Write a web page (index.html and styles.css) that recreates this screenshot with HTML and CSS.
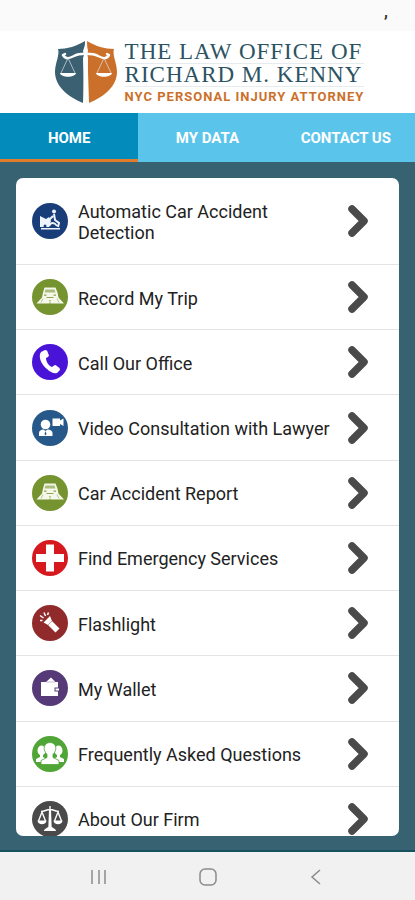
FILE: index.html
```html
<!DOCTYPE html>
<html lang="en">
<head>
<meta charset="utf-8">
<meta name="viewport" content="width=device-width, initial-scale=1">
<title>The Law Office of Richard M. Kenny</title>
<link rel="stylesheet" href="styles.css">
</head>
<body>
<svg class="defs" aria-hidden="true">
  <symbol id="chevron" viewBox="0 0 20 32"><path d="M4 4l12 12L4 28" fill="none" stroke="#4a4a4b" stroke-width="7.500" stroke-linecap="round" stroke-linejoin="round"/></symbol>
  <symbol id="road" viewBox="0 0 36 36">
    <circle cx="18" cy="18" r="18" fill="#75932f"/>
    <path d="M12.500 8.500h11l2 5 1 5 5.500 6H4.500l5.500-6 1-5z" fill="#f4f7e9"/>
    <path d="M13.500 10.500h9l1 3h-11z" fill="#a9bd7c"/>
    <path d="M12 16.200h2.500M21.500 16.200H24M14.500 18.500h7M18 21v1.500M18 23.500V25" stroke="#8ba550" stroke-width="1.200"/>
    <path d="M11 19.500L9 23.500M25 19.500l2 4" stroke="#b9c995" stroke-width="1"/>
  </symbol>
</svg>
<div class="status"><span>,</span></div>
<header class="brand">
  <svg class="shield" viewBox="0 0 62 62" aria-hidden="true">
    <path d="M30 0C22 5 12 8 3 8c2 6-3 14-3 23 0 14 13 25 28 31z" fill="#3b6072"/>
    <path d="M32 0c8 5 18 8 27 8-2 6 3 14 3 23 0 14-13 25-28 31z" fill="#cb702b"/>
    <path d="M31 1l2 9-1 4 1 3-1 45h-3l-1-45 1-3-1-4z" fill="#fff"/>
    <path d="M8 14c3 5 7 3 11 1 5-3 19-3 24 0 4 2 8 4 11-1M8 14l2-1M54 14l-2-1" fill="none" stroke="#fff" stroke-width="2.500" stroke-linecap="round"/>
    <path d="M13 17L6 32M13 17l7 15M49 17l-7 15M49 17l7 15" stroke="#dce2e2" stroke-width=".7"/>
    <path d="M5 32h16c-1 5-15 5-16 0zM41 32h16c-1 5-15 5-16 0z" fill="#fff"/>
  </svg>
  <div class="brand-text">
    <p class="name">THE LAW OFFICE OF</p>
    <p class="name">RICHARD M. KENNY</p>
    <p class="tagline">NYC PERSONAL INJURY ATTORNEY</p>
  </div>
</header>
<nav class="tabs">
  <a class="active" href="#home" aria-current="page">HOME</a>
  <a href="#data">MY DATA</a>
  <a href="#contact">CONTACT US</a>
</nav>
<main>
  <div class="card">
    <ul class="menu">
      <li><a href="#detection">
        <svg class="icon" viewBox="0 0 36 36"><circle cx="18" cy="18" r="18" fill="#183d78"/><path d="M8 13l6 3 3-2 2 4-2 6H8zM9 25h19v1.500H9z" fill="#eef3fa"/><circle cx="22" cy="8.500" r="2" fill="#eef3fa"/><path d="M22 11l1 6 4 3-1 4M21 13l-4 4M17 23c2-4 5-4 8 0" fill="none" stroke="#eef3fa" stroke-width="2"/><circle cx="13" cy="23" r="1.500" fill="#183d78"/><circle cx="22" cy="23" r="1.500" fill="#183d78"/></svg>
        <span>Automatic Car Accident Detection</span><svg class="chevron"><use href="#chevron"/></svg></a></li>
      <li><a href="#trip"><svg class="icon"><use href="#road"/></svg><span>Record My Trip</span><svg class="chevron"><use href="#chevron"/></svg></a></li>
      <li><a href="#call">
        <svg class="icon" viewBox="0 0 36 36"><circle cx="18" cy="18" r="18" fill="#4a14d8"/><path d="M9 8l4-2 2 .5 2 5-1 1.500-2 1c0 4 3 8 6 9l2-1.500 1.500-.5 4 3 .5 2-3 3c-3 1-7-1-10-4-5-4-8-10-7-15z" fill="#fff"/></svg>
        <span>Call Our Office</span><svg class="chevron"><use href="#chevron"/></svg></a></li>
      <li><a href="#video">
        <svg class="icon" viewBox="0 0 36 36"><circle cx="18" cy="18" r="18" fill="#265889"/><circle cx="13.500" cy="14.500" r="4.800" fill="#fff"/><path d="M7 26v-3c0-2 2-3.500 4.500-3.500l2 1.500 2-1.500c2.500 0 5 1.500 5 3.500v3zM20.500 8.500H28v2l3.500-2v7.500l-3.500-2v2h-7.500z" fill="#fff"/><path d="M13.500 21l-1 3 1 1.500 1-1.500z" fill="#265889"/></svg>
        <span>Video Consultation with Lawyer</span><svg class="chevron"><use href="#chevron"/></svg></a></li>
      <li><a href="#report"><svg class="icon"><use href="#road"/></svg><span>Car Accident Report</span><svg class="chevron"><use href="#chevron"/></svg></a></li>
      <li><a href="#emergency">
        <svg class="icon" viewBox="0 0 36 36"><circle cx="18" cy="18" r="18" fill="#d5191e"/><path d="M14 4.500h8V14h10v8H22v9.500h-8V22H4v-8h10z" fill="#fff"/></svg>
        <span>Find Emergency Services</span><svg class="chevron"><use href="#chevron"/></svg></a></li>
      <li><a href="#flashlight">
        <svg class="icon" viewBox="0 0 36 36"><circle cx="18" cy="18" r="18" fill="#912a2a"/><path d="M11.500 17.500l6.500-6.500 2 5 7.500 7.500-4 4-7.500-7.500z" fill="#fff"/><path d="M8 15.500l2.500 0M8 10.500l3.500 2.500M12 7.500l1.500 3.500M16.500 7.500l-1 2.500" stroke="#fff" stroke-width="1.500"/><path d="M16 20l4-4" stroke="#c98583" stroke-width=".8"/></svg>
        <span>Flashlight</span><svg class="chevron"><use href="#chevron"/></svg></a></li>
      <li><a href="#wallet">
        <svg class="icon" viewBox="0 0 36 36"><circle cx="18" cy="18" r="18" fill="#563a78"/><path d="M9 12h5l5-4.500 4.500 4.500H26v5.500h-3.500v4H26V26H9zM23.500 18.500H27v2h-3.500z" fill="#fff"/><path d="M14 12h9" stroke="#b8a9cb" stroke-width=".8"/></svg>
        <span>My Wallet</span><svg class="chevron"><use href="#chevron"/></svg></a></li>
      <li><a href="#faq">
        <svg class="icon" viewBox="0 0 36 36"><circle cx="18" cy="18" r="18" fill="#4fa535"/><g fill="#fff"><ellipse cx="9.500" cy="14.500" rx="4" ry="5"/><ellipse cx="26.500" cy="14.500" rx="4" ry="5"/><path d="M4 26v-3l4-2v-3h3v3l4 2v3zM21 26v-3l4-2v-3h3v3l4 2v3z"/></g><path d="M9 28.500V24.500l6-3v-3c-5-5-3-12 3-12s8 7 3 12v3l6 3v4z" fill="#fff" stroke="#4fa535" stroke-width=".8"/></svg>
        <span>Frequently Asked Questions</span><svg class="chevron"><use href="#chevron"/></svg></a></li>
      <li><a href="#about">
        <svg class="icon" viewBox="0 0 36 36"><circle cx="18" cy="18" r="18" fill="#4a4a4b"/><path d="M18 5v22M9 10.500c4 0 5-2 9-2s5 2 9 2M10 11L6.500 20M10 11l3.500 9M26 11l-3.500 9M26 11l3.500 9" fill="none" stroke="#fff" stroke-width="1.400"/><path d="M17 8h2l.7 19h-3.400zM5.500 19.500h9c0 5-9 5-9 0zM21.500 19.500h9c0 5-9 5-9 0zM12 30c0-2 3-3 4-4h4c1 1 4 2 4 4z" fill="#fff"/></svg>
        <span>About Our Firm</span><svg class="chevron"><use href="#chevron"/></svg></a></li>
    </ul>
  </div>
</main>
<footer class="system">
  <button aria-label="Recent apps"><svg viewBox="0 0 18 18"><path d="M2 2v14M9 2v14M15 2v14"/></svg></button>
  <button aria-label="Home"><svg viewBox="0 0 18 18"><rect x="1" y="1" width="16" height="16" rx="5"/></svg></button>
  <button aria-label="Back"><svg viewBox="0 0 18 18"><path d="M12 2L4 9l8 7"/></svg></button>
</footer>
</body>
</html>
```
FILE: styles.css
```css
* { box-sizing: border-box; }
body {
  margin: 0;
  height: 100vh;
  display: flex;
  flex-direction: column;
  font-family: Roboto, "Liberation Sans", sans-serif;
  background: #376271;
}
a { color: inherit; text-decoration: none; }
.defs { display: none; }
.status {
  flex: none;
  height: 31px;
  padding: 2px 27px;
  background: #fafafa;
  color: #333;
  font-size: 16px;
  font-weight: 700;
  line-height: 20px;
  text-align: right;
}
.brand {
  flex: none;
  height: 82px;
  display: flex;
  align-items: center;
  justify-content: center;
  gap: 8px;
  padding-left: 4px;
  background: #fff;
}
.shield { width: 62px; height: 62px; }
.brand-text { padding-top: 4px; white-space: nowrap; }
.brand-text p { margin: 0; }
.name {
  font-family: "Liberation Serif", serif;
  font-size: 23px;
  line-height: 22px;
  letter-spacing: 1px;
  color: #2c5363;
  border-bottom: 1px solid #e6ecee;
}
.tagline {
  font-size: 13px;
  font-weight: 700;
  line-height: 20px;
  letter-spacing: 1px;
  color: #cb702b;
}
.tabs {
  flex: none;
  height: 49px;
  display: flex;
  background: #5bc4eb;
  color: #fff;
  font-size: 15px;
  font-weight: 700;
}
.tabs a {
  flex: 1;
  display: flex;
  align-items: center;
  justify-content: center;
  padding-top: 4px;
  border-bottom: 3px solid transparent;
}
.tabs .active { background: #028bbb; border-color: #e07c2c; }
main {
  flex: 1;
  min-height: 0;
  display: flex;
  padding: 16px 16px 14px;
  border-bottom: 2px solid #17505f;
}
.card {
  flex: 1;
  display: flex;
  overflow: hidden;
  border-radius: 7px;
  background: #fff;
}
/* The list runs past the card's lower edge, so the last row is cut. */
.menu {
  flex: 1;
  display: flex;
  flex-direction: column;
  margin: 0 0 -16px;
  padding: 0;
  list-style: none;
}
.menu li { flex: 1; display: flex; border-bottom: 1px solid #e4e4e6; }
.menu li:first-child { flex: 0 0 87px; }
.menu a {
  flex: 1;
  display: flex;
  align-items: center;
  gap: 10px;
  padding: 0 31px 0 16px;
  font-size: 18px;
  line-height: 21px;
  color: #222;
}
.menu span { flex: 1; padding-top: 2px; }
.icon { flex: none; width: 36px; height: 36px; }
.chevron { flex: none; width: 20px; height: 32px; }
.system {
  flex: none;
  height: 48px;
  display: flex;
  padding: 2px 44px 0;
  background: #f1f1f1;
}
.system button {
  flex: 1;
  display: flex;
  align-items: center;
  justify-content: center;
  padding: 0;
  border: 0;
  background: none;
}
.system svg { width: 18px; height: 18px; fill: none; stroke: #8b8b8b; stroke-width: 1.500; }
```
